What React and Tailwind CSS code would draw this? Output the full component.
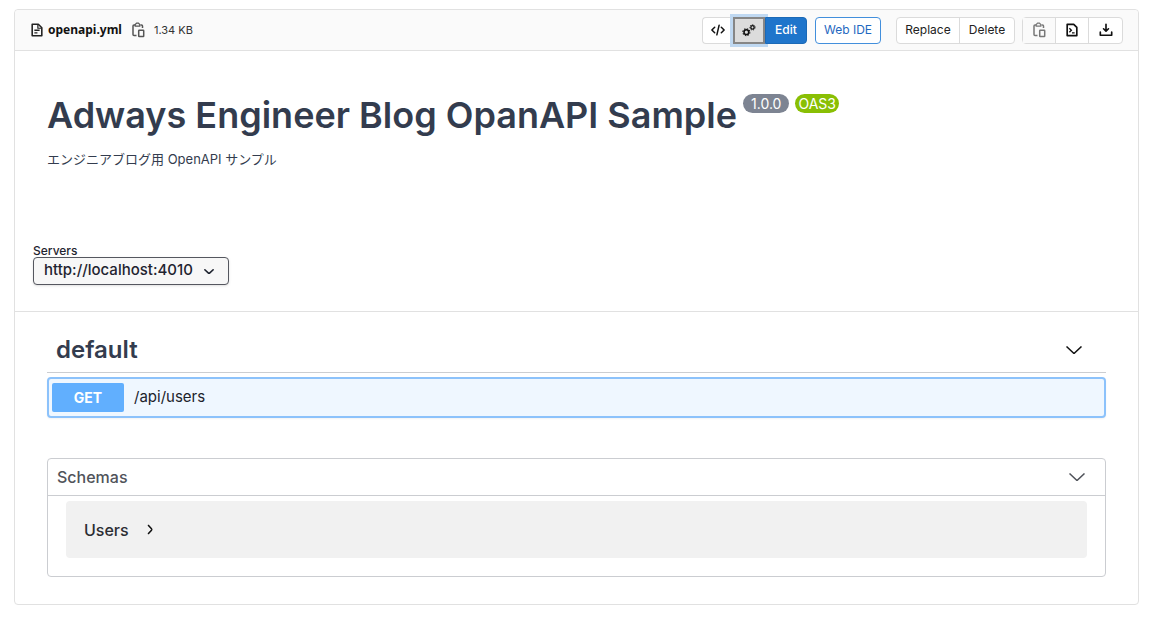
import React, { useState } from 'react';

const DocIcon = ({ className }) => (
  <svg viewBox="0 0 16 16" className={className} fill="none" stroke="currentColor" strokeWidth="1.8" aria-hidden="true">
    <path d="M2.500 1.500h7L13.500 5.500v9h-11z" strokeLinejoin="round" />
    <path d="M9 2v4h4" strokeWidth="1.4" />
    <path d="M5 8.300h6M5 11.300h3.500" strokeWidth="1.6" />
  </svg>
);

const CopyIcon = ({ className }) => (
  <svg viewBox="0 0 16 16" className={className} fill="none" stroke="currentColor" strokeWidth="1.5" aria-hidden="true">
    <path d="M6.500 13.500H4a1 1 0 0 1-1-1V4a1 1 0 0 1 1-1h1M10.500 3h1a1 1 0 0 1 1 1v2" />
    <path d="M5.200 4.200V2.600L6.600 1.200h1.800l1.400 1.400v1.600z" strokeWidth="1.2" />
    <rect x="8.700" y="8.200" width="5" height="6.400" rx="0.500" />
  </svg>
);

const CodeIcon = ({ className }) => (
  <svg viewBox="0 0 16 16" className={className} fill="none" stroke="currentColor" strokeWidth="1.700" strokeLinecap="round" strokeLinejoin="round" aria-hidden="true">
    <path d="M4.200 4.800 1 8l3.200 3.200M11.800 4.800 15 8l-3.200 3.200M9.300 2.500 6.700 13.500" />
  </svg>
);

const GearsIcon = ({ className }) => (
  <svg viewBox="0 0 16 16" className={className} fill="none" stroke="currentColor" aria-hidden="true">
    <circle cx="5" cy="10.500" r="2.700" strokeWidth="1.800" />
    <circle cx="5" cy="10.500" r="4" strokeWidth="1.200" strokeDasharray="1.570 1.570" />
    <circle cx="12" cy="5" r="1.900" strokeWidth="1.500" />
    <circle cx="12" cy="5" r="3" strokeWidth="1.100" strokeDasharray="1.340 1.350" />
  </svg>
);

const RawIcon = ({ className }) => (
  <svg viewBox="0 0 16 16" className={className} fill="none" stroke="currentColor" strokeWidth="1.900" aria-hidden="true">
    <path d="M2.500 1.500h7.500l3.500 3.500v9.500h-11z" strokeLinejoin="round" />
    <path d="m5 6 2.300 2.200L5 10.500M8 11.300h3" strokeWidth="1.500" />
  </svg>
);

const DownloadIcon = ({ className }) => (
  <svg viewBox="0 0 16 16" className={className} fill="none" stroke="currentColor" strokeWidth="1.900" strokeLinecap="round" strokeLinejoin="round" aria-hidden="true">
    <path d="M8 1.500v7.500M5.200 6.600 8 9.400l2.800-2.800M1.500 10.500V14h13v-3.500" />
  </svg>
);

const Chevron = ({ className, width = 1.5 }) => (
  <svg viewBox="0 0 16 8" className={className} fill="none" stroke="currentColor" strokeWidth={width} aria-hidden="true">
    <path d="m0.500 0.500 7.500 7 7.500-7" />
  </svg>
);

const FileHeader = () => (
  <header className="flex h-[41px] items-center justify-between rounded-t border-b border-[#e1e1e1] bg-[#fafafa] px-[15px] font-[Inter,sans-serif] text-xs">
    <div className="flex items-center">
      <DocIcon className="h-3.5 w-3.5 text-[#222]" />
      <strong className="ml-1 font-['Noto_Sans',sans-serif] text-xs font-bold text-[#111]">openapi.yml</strong>
      <button type="button" aria-label="Copy file path" className="mx-2 text-[#555]">
        <CopyIcon className="h-4 w-4" />
      </button>
      <span className="text-[11px] text-[#333]">1.34 KB</span>
    </div>

    <div className="flex items-center">
      <div className="flex h-[27px]">
        <button type="button" aria-label="Display source" className="flex w-[31px] items-center justify-center rounded-l border border-r-0 border-[#dbdbdb] bg-white text-[#111]">
          <CodeIcon className="h-3.5 w-3.5" />
        </button>
        <button type="button" aria-label="Display rendered file" className="flex w-8 items-center justify-center border-2 border-[#868686] bg-[#dcdcdc] text-[#111] ring-3 ring-[#bfd8f1]">
          <GearsIcon className="h-3.5 w-3.5" />
        </button>
        <button type="button" className="z-10 w-[42px] rounded-r border border-[#1b69b6] bg-[#1f75cb] font-medium text-white">Edit</button>
      </div>
      <button type="button" className="ml-2 h-[27px] w-[66px] rounded border border-[#428fdc] bg-white text-[#1f68c0]">Web IDE</button>
      <div className="ml-[15px] flex h-[27px] divide-x divide-[#dbdbdb] rounded border border-[#dbdbdb] bg-white text-[#222]">
        <button type="button" className="w-[63px]">Replace</button>
        <button type="button" className="w-[54px]">Delete</button>
      </div>
      <div className="ml-[7px] flex h-[27px] divide-x divide-[#dbdbdb] rounded border border-[#dbdbdb] bg-white text-[#111]">
        <button type="button" aria-label="Copy file contents" className="flex w-[33px] items-center justify-center bg-[#fafafa] text-[#777]">
          <CopyIcon className="h-4 w-4" />
        </button>
        <button type="button" aria-label="Open raw" className="flex w-[33px] items-center justify-center">
          <RawIcon className="h-3.5 w-3.5" />
        </button>
        <button type="button" aria-label="Download" className="flex w-[33px] items-center justify-center">
          <DownloadIcon className="h-3.5 w-3.5" />
        </button>
      </div>
    </div>
  </header>
);

const App = () => {
  const [server, setServer] = useState('http://localhost:4010');

  return (
    <div className="min-h-screen bg-white px-[14px] pt-[9px] pb-3 font-[Inter,'Noto_Sans_CJK_JP',sans-serif]">
      <main className="rounded border border-[#e1e1e1] bg-white">
        <FileHeader />

        {/* API info */}
        <section className="px-8 pt-10 pb-12 text-[#333c4e]">
          <div className="flex items-start">
            <h1 className="text-4xl leading-[48px] font-semibold">Adways Engineer Blog OpanAPI Sample</h1>
            <div className="mt-[3px] ml-1.5 flex gap-1.5 text-sm leading-[19px] text-white">
              <span className="rounded-full bg-[#7d8492] px-2">1.0.0</span>
              <span className="rounded-full bg-[#89bf04] px-[3px]">OAS3</span>
            </div>
          </div>
          <p className="mt-2.5 text-[13px] leading-5">エンジニアブログ用 OpenAPI サンプル</p>
        </section>

        {/* Servers */}
        <section className="border-b border-[#e1e1e1] px-[18px] pt-7 pb-[26px] text-[#1f2430]">
          <label htmlFor="server" className="block text-xs leading-3 font-medium">Servers</label>
          <div className="relative w-fit">
            <select
              id="server"
              value={server}
              onChange={(e) => setServer(e.target.value)}
              className="block h-7 w-[196px] appearance-none rounded border border-[#55575f] bg-[#f7f7f7] pr-8 pb-0.5 pl-2.5 text-[15px] leading-5 font-medium shadow-sm"
            >
              <option>http://localhost:4010</option>
            </select>
            <Chevron className="pointer-events-none absolute top-3 right-[15px] h-[5px] w-[10px]" width={2.5} />
          </div>
        </section>

        {/* Operations */}
        <section className="px-8 pt-4 pb-[27px]">
          <button type="button" className="flex w-full items-center justify-between border-b border-[#cbcdd1] py-[5px] pr-6 pl-[9px] text-[#333c4e]">
            <h2 className="text-2xl leading-[34px] font-semibold">default</h2>
            <Chevron className="h-2 w-4 text-[#111]" />
          </button>
          <button type="button" className="mt-1 flex h-[41px] w-full items-center gap-2.5 rounded border-2 border-[#8cc2fb] bg-[#eff7ff] px-[3px] shadow-xs">
            <span className="h-[29px] w-18 rounded-xs bg-[#61affe] text-center text-sm leading-[29px] font-bold text-white">GET</span>
            <span className="text-[15px] text-[#20232b]">/api/users</span>
          </button>

          {/* Schemas */}
          <div className="mt-10 rounded border border-[#cbcdd1]">
            <button type="button" className="flex w-full items-center justify-between border-b border-[#cbcdd1] py-1.5 pr-5 pl-[9px] text-[#50535a]">
              <h3 className="text-base leading-6 font-medium">Schemas</h3>
              <Chevron className="h-2 w-4" />
            </button>
            <div className="px-[18px] pt-[5px] pb-[18px]">
              <button type="button" className="flex h-[57px] w-full items-center rounded bg-[#f1f1f1] px-[18px] text-[#2b2d33]">
                <span className="text-base font-medium">Users</span>
                <Chevron className="ml-4 h-[5px] w-[10px] -rotate-90 text-[#111]" width={2.5} />
              </button>
            </div>
          </div>
        </section>
      </main>
    </div>
  );
};

export default App;
